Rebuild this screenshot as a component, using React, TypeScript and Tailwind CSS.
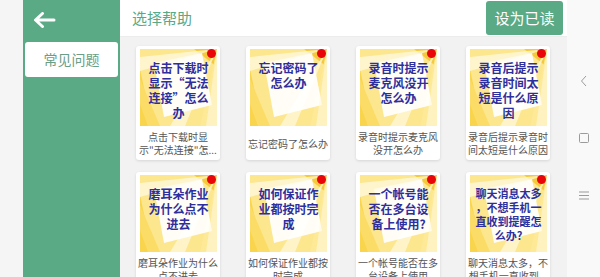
import React from "react";

type Item = {
  title: string[];
  caption: string[];
  small?: boolean;
};

const items: Item[] = [
  {
    title: ["点击下载时", "显示“无法", "连接”怎么", "办"],
    caption: ["点击下载时显", "示\"无法连接\"怎..."],
  },
  { title: ["忘记密码了", "怎么办"], caption: ["忘记密码了怎么办"] },
  {
    title: ["录音时提示", "麦克风没开", "怎么办"],
    caption: ["录音时提示麦克风", "没开怎么办"],
  },
  {
    title: ["录音后提示", "录音时间太", "短是什么原", "因"],
    caption: ["录音后提示录音时", "间太短是什么原因"],
  },
  {
    title: ["磨耳朵作业", "为什么点不", "进去"],
    caption: ["磨耳朵作业为什么", "点不进去"],
  },
  {
    title: ["如何保证作", "业都按时完", "成"],
    caption: ["如何保证作业都按", "时完成"],
  },
  {
    title: ["一个帐号能", "否在多台设", "备上使用?"],
    caption: ["一个帐号能否在多", "台设备上使用"],
  },
  {
    title: ["聊天消息太多", "，不想手机一", "直收到提醒怎", "么办?"],
    caption: ["聊天消息太多，不", "想手机一直收到..."],
    small: true,
  },
];

const font = { fontFamily: '"Noto Sans CJK SC", "Noto Sans", sans-serif' };

function Cover() {
  return (
    <svg
      className="absolute inset-0"
      width="77"
      height="77"
      viewBox="0 0 77 77"
    >
      <rect width="77" height="77" fill="#fce68e" />
      <polygon points="0,20 12,77 0,77" fill="#f9d54e" />
      <polygon points="0,30 20,77 8,77 0,55" fill="#fbdc66" />
      <polygon points="54,0 77,0 77,18" fill="#f6c93c" />
      <polygon points="77,0 77,77 60,77" fill="#fde996" />
      <polygon points="77,0 30,77 45,77" fill="#fff7d6" opacity="0.8" />
      <polygon points="14,14 62,4 72,56 24,68" fill="#ffffff" opacity="0.92" />
      <polygon points="77,0 0,8 0,22" fill="#fffbe8" opacity="0.7" />
      <polygon points="77,0 66,77 77,77" fill="#fff8dc" opacity="0.6" />
    </svg>
  );
}

function Card({ item }: { item: Item }) {
  return (
    <div className="w-[84px] h-[114px] bg-white rounded-[3px] shadow-[0_1px_3px_rgba(0,0,0,0.12)] pt-[3px] flex flex-col items-center">
      <div className="relative w-[77px] h-[77px] overflow-hidden ml-[1px]">
        <Cover />
        <div
          className={
            "relative pt-[11px] text-center font-bold text-[#2d2f9e] " +
            (item.small
              ? "text-[11px] leading-[14px]"
              : "text-[12px] leading-[15px]")
          }
          style={font}
        >
          {item.title.map((l, i) => (
            <div key={i}>{l}</div>
          ))}
        </div>
        <div className="absolute top-[0px] right-[1px] w-[9px] h-[9px] rounded-full bg-[#e8060a]" />
      </div>
      <div
        className="flex-1 flex flex-col justify-center items-center text-[10px] leading-[13px] text-[#555] whitespace-nowrap"
        style={font}
      >
        {item.caption.map((l, i) => (
          <div key={i}>{l}</div>
        ))}
      </div>
    </div>
  );
}

export default function App() {
  return (
    <div className="w-[600px] h-[277px] flex overflow-hidden bg-[#f4f4f4]" style={font}>
      <div className="w-[23px] bg-[#f5f5f5]" />

      <div className="w-[97px] bg-[#5aaa86] flex flex-col">
        <div className="pt-[12px] pl-[10px] h-[42px]">
          <svg width="23" height="16" viewBox="0 0 23 16">
            <path
              d="M21 8 H3 M9.5 1.5 L2.5 8 L9.5 14.5"
              fill="none"
              stroke="#ffffff"
              strokeWidth="3"
              strokeLinecap="round"
              strokeLinejoin="round"
            />
          </svg>
        </div>
        <div className="mx-[2px] h-[35px] bg-white rounded-[3px] flex items-center justify-center text-[14px] text-[#6a9e86]">
          常见问题
        </div>
      </div>

      <div className="w-[447px] flex flex-col">
        <div className="h-[37px] bg-white flex items-center justify-between pl-[12px] pr-[4px] shrink-0 border-b border-[#ececec]">
          <span className="text-[15px] text-[#5aa986]">选择帮助</span>
          <div className="w-[77px] h-[34px] bg-[#5aaa86] rounded-[3px] flex items-center justify-center text-[15px] text-white">
            设为已读
          </div>
        </div>
        <div className="flex-1 bg-[#f2f2f2] pt-[9px] pl-[16px]">
          <div className="grid grid-cols-[repeat(4,84px)] gap-x-[26px] gap-y-[12px]">
            {items.map((it, i) => (
              <Card key={i} item={it} />
            ))}
          </div>
        </div>
      </div>

      <div className="w-[33px] bg-[#f9f9f9] flex flex-col items-center text-[#9b9b9b]">
        <svg className="mt-[75px]" width="8" height="12" viewBox="0 0 8 12">
          <path d="M6 1 L1.5 6 L6 11" fill="none" stroke="#9b9b9b" strokeWidth="1" />
        </svg>
        <svg className="mt-[46px]" width="10" height="10" viewBox="0 0 10 10">
          <rect x="0.5" y="0.5" width="9" height="9" rx="1" fill="none" stroke="#9b9b9b" strokeWidth="1" />
        </svg>
        <svg className="mt-[48px]" width="10" height="9" viewBox="0 0 10 9">
          <path d="M0 1 H10 M0 4.5 H10 M0 8 H10" stroke="#9b9b9b" strokeWidth="1" />
        </svg>
      </div>
    </div>
  );
}
